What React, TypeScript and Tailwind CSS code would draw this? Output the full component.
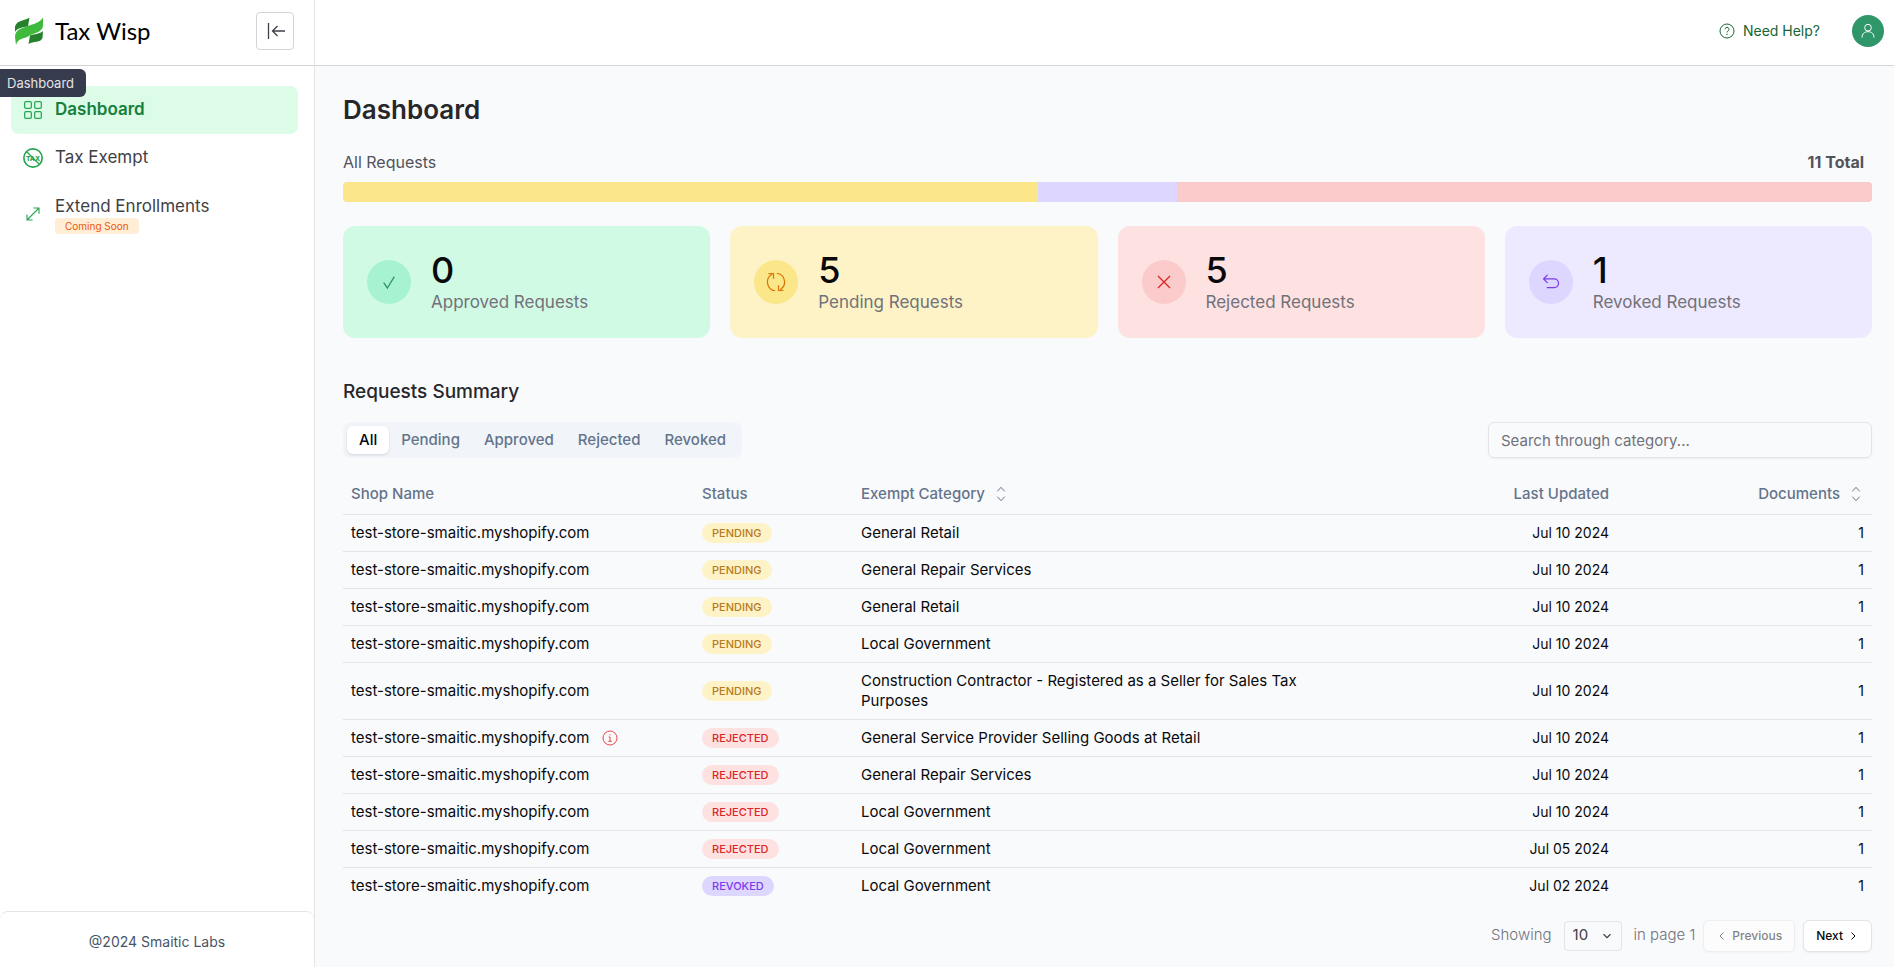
import type { ReactNode } from "react";
import { PiArrowUUpLeft } from "react-icons/pi";

const requests = [
  { status: "PENDING", category: "General Retail", updated: "Jul 10 2024" },
  { status: "PENDING", category: "General Repair Services", updated: "Jul 10 2024" },
  { status: "PENDING", category: "General Retail", updated: "Jul 10 2024" },
  { status: "PENDING", category: "Local Government", updated: "Jul 10 2024" },
  {
    status: "PENDING",
    category: "Construction Contractor - Registered as a Seller for Sales Tax Purposes",
    updated: "Jul 10 2024",
  },
  {
    status: "REJECTED",
    category: "General Service Provider Selling Goods at Retail",
    updated: "Jul 10 2024",
    info: true,
  },
  { status: "REJECTED", category: "General Repair Services", updated: "Jul 10 2024" },
  { status: "REJECTED", category: "Local Government", updated: "Jul 10 2024" },
  { status: "REJECTED", category: "Local Government", updated: "Jul 05 2024" },
  { status: "REVOKED", category: "Local Government", updated: "Jul 02 2024" },
];

const badgeColors: Record<string, string> = {
  PENDING: "bg-[#fef3c7] text-[#b97a1b]",
  REJECTED: "bg-[#fee2e2] text-[#dc2626]",
  REVOKED: "bg-[#ddd6fe] text-[#7c3aed]",
};

const tabs = ["All", "Pending", "Approved", "Rejected", "Revoked"];

function Icon({ size = 20, width = 1.5, children }: { size?: number; width?: number; children: ReactNode }) {
  return (
    <svg
      width={size}
      height={size}
      viewBox="0 0 24 24"
      fill="none"
      stroke="currentColor"
      strokeWidth={width}
      className="shrink-0"
      aria-hidden="true"
    >
      {children}
    </svg>
  );
}

function Logo() {
  return (
    <svg width="28" height="28" viewBox="0 0 28 28" className="shrink-0" aria-hidden="true">
      <path d="M0 15V9.500C2 3 9 4 14.500.5L13 9.500C8 10 2 11 0 15Z" fill="#27802b" />
      <path d="M13.500 27 15 18.500c5-1.500 10-1.500 13-4.500l-.5 7c-2 5-9 3-14 6Z" fill="#27802b" />
      <path d="M1 28 0 20C0 12 8 11 13 9 18 7 25 6 28 .5V9c-1 7-10 7-14 10-5 3-11 2-13 9Z" fill="#3fba3c" />
    </svg>
  );
}

function SortIcon() {
  return (
    <Icon size={16}>
      <path d="M6.500 8 12 2l5.500 6M6.500 16l5.500 6 5.500-6" />
    </Icon>
  );
}

function StatCard({
  value,
  label,
  card,
  circle,
  children,
}: {
  value: number;
  label: string;
  card: string;
  circle: string;
  children: ReactNode;
}) {
  return (
    <div className={`flex h-28 items-center gap-5 rounded-xl px-6 pb-px ${card}`}>
      <div className={`flex size-11 shrink-0 items-center justify-center rounded-full ${circle}`}>
        {children}
      </div>
      <div>
        <p className="text-4xl font-medium leading-10 text-[#09090b]">{value}</p>
        <p className="text-[17px] leading-6 text-[#71717a]">{label}</p>
      </div>
    </div>
  );
}

export default function App() {
  return (
    <div className="flex min-h-screen bg-[#f9fafc] font-['Inter',sans-serif] text-[15px] text-[#09090b]">
      <aside className="flex w-[315px] shrink-0 flex-col border-r border-[#e4e4e7] bg-white">
        <div className="flex h-[66px] items-center border-b border-[#d4d4d8] pb-[3px] pl-[15px] pr-5">
          <Logo />
          <span className="ml-3 font-['Lato',sans-serif] text-2xl text-black">Tax Wisp</span>
          <button
            type="button"
            aria-label="Collapse sidebar"
            className="ml-auto flex size-[38px] items-center justify-center rounded border border-[#d4d4d8] text-[#3f3f46]"
          >
            <Icon size={24} width={1.3}>
              <path d="M5.500 4v16M22 12H9.500M14.500 7l-5 5 5 5" />
            </Icon>
          </button>
        </div>

        <nav className="relative flex flex-col px-[11px] pt-5 text-[17px] text-[#3f3f46]">
          <a
            href="#dashboard"
            className="mr-[5px] flex h-12 items-center gap-3 rounded-lg bg-[#dcfce7] px-3 font-semibold text-[#15803d]"
          >
            <span className="flex w-5 justify-center text-[#28a652]">
              <Icon>
                <rect x="2" y="2" width="8" height="8" rx="1.500" />
                <rect x="14" y="2" width="8" height="8" rx="1.500" />
                <rect x="2" y="14" width="8" height="8" rx="1.500" />
                <rect x="14" y="14" width="8" height="8" rx="1.500" />
              </Icon>
            </span>
            Dashboard
          </a>
          <a href="#tax-exempt" className="flex h-12 items-center gap-3 px-3">
            <span className="flex w-5 justify-center text-[#28a652]">
              <Icon width={2}>
                <circle cx="12" cy="12" r="11" />
                <path d="M4.500 4.500l15 15" strokeWidth="1.500" />
                <text
                  x="12"
                  y="15"
                  textAnchor="middle"
                  fontSize="8"
                  fontWeight="800"
                  fill="currentColor"
                  stroke="none"
                  aria-hidden="true"
                >
                  TAX
                </text>
              </Icon>
            </span>
            Tax Exempt
          </a>
          <a href="#extend" className="flex h-16 items-center gap-3 px-3">
            <span className="flex w-5 justify-center text-[#28a652]">
              <Icon size={18}>
                <path d="M4 20 20 4M12.500 4h7.500v7.500M11.500 20H4v-7.500" />
              </Icon>
            </span>
            <span className="flex flex-col items-start">
              <span className="leading-6">Extend Enrollments</span>
              <span className="rounded bg-[#ffedd5] px-[10px] text-[10px] leading-4 text-[#ea580c]">
                Coming Soon
              </span>
            </span>
          </a>
          <span
            role="tooltip"
            className="absolute left-0 top-[3px] rounded-r-md bg-[#2b3044]/95 pl-[7px] pr-3 text-[13px] leading-7 text-[#e4e4e7]"
          >
            Dashboard
          </span>
        </nav>

        <footer className="mt-auto flex h-14 items-center justify-center rounded-t-lg border-t border-[#e4e4e7] pt-1 text-sm text-[#475569]">
          @2024 Smaitic Labs
        </footer>
      </aside>

      <div className="flex min-w-0 flex-1 flex-col">
        <header className="flex h-[66px] items-center justify-end gap-8 border-b border-[#d4d4d8] bg-white pb-[3px] pr-[10px]">
          <a href="#help" className="flex items-center gap-2 text-sm text-[#166534]">
            <Icon size={16}>
              <circle cx="12" cy="12" r="10.500" />
              <path d="M9 9.500a3 3 0 1 1 4.500 2.600c-1 .5-1.500 1-1.500 2M12 16v2" />
            </Icon>
            Need Help?
          </a>
          <button
            type="button"
            aria-label="Account"
            className="flex size-8 items-center justify-center rounded-full bg-[#2f966a] text-white"
          >
            <Icon size={16}>
              <circle cx="12" cy="7" r="5" />
              <path d="M3 22c0-6 4-9 9-9s9 3 9 9" />
            </Icon>
          </button>
        </header>

        <main className="flex flex-col pl-7 pr-[22px] pt-7">
          <h1 className="text-[26px] font-semibold leading-8 text-[#27272a]">Dashboard</h1>

          <div className="mt-6 flex justify-between pr-2 text-base leading-6 text-[#52525b]">
            <span>All Requests</span>
            <span className="font-bold">11 Total</span>
          </div>
          <div className="mt-2 flex h-5 overflow-hidden rounded">
            <div className="flex-5 bg-[#fce68a]" />
            <div className="flex-1 bg-[#ddd6fe]" />
            <div className="flex-5 bg-[#fbcaca]" />
          </div>

          <div className="mt-6 grid grid-cols-4 gap-5">
            <StatCard value={0} label="Approved Requests" card="bg-[#d1fae5]" circle="bg-[#a7f3d0] text-[#2f966a]">
              <Icon size={16} width={2}>
                <path d="M4 13l5.500 8L20 4" />
              </Icon>
            </StatCard>
            <StatCard value={5} label="Pending Requests" card="bg-[#fef3c7]" circle="bg-[#fce68a] text-[#d97706]">
              <Icon>
                <path d="M11 22.500A10.500 10.500 0 0 1 7 3M3 2h6v6M13 1.500A10.500 10.500 0 0 1 17 21M21 22h-6v-6" />
              </Icon>
            </StatCard>
            <StatCard value={5} label="Rejected Requests" card="bg-[#fee2e2]" circle="bg-[#fbcaca] text-[#dc2626]">
              <Icon size={16} width={2}>
                <path d="M3 3l18 18M21 3 3 21" />
              </Icon>
            </StatCard>
            <StatCard value={1} label="Revoked Requests" card="bg-[#ede9fe]" circle="bg-[#ddd6fe] text-[#7c3aed]">
              <PiArrowUUpLeft size={20} />
            </StatCard>
          </div>

          <h2 className="mt-10 text-[19px] font-medium leading-7 text-[#27272a]">Requests Summary</h2>

          <div className="mt-4 flex items-center justify-between">
            <div role="tablist" className="flex h-9 items-center rounded-lg bg-[#f1f5f9] p-1 font-medium text-[#64748b]">
              {tabs.map((tab, i) => (
                <button
                  key={tab}
                  type="button"
                  role="tab"
                  aria-selected={i === 0}
                  className={`h-7 rounded-md px-3 ${i === 0 ? "bg-white text-[#020617] shadow-sm" : ""}`}
                >
                  {tab}
                </button>
              ))}
            </div>
            <input
              type="text"
              aria-label="Search through category"
              placeholder="Search through category..."
              className="h-9 w-96 rounded-md border border-[#e4e4e7] bg-transparent px-3 shadow-xs placeholder:text-[#71717a]"
            />
          </div>

          <table className="mt-4 w-full table-fixed text-left leading-5">
            <thead>
              <tr className="h-10 border-b border-[#e4e4e7] text-[#64748b]">
                <th className="w-[351px] px-2 font-medium">Shop Name</th>
                <th className="w-[159px] px-2 font-medium">Status</th>
                <th className="px-2 font-medium">
                  <span className="flex items-center gap-2">
                    Exempt Category <SortIcon />
                  </span>
                </th>
                <th className="w-[280px] px-2 text-right font-medium">Last Updated</th>
                <th className="w-[255px] px-2 font-medium">
                  <span className="flex items-center justify-end gap-2">
                    Documents <SortIcon />
                  </span>
                </th>
              </tr>
            </thead>
            <tbody>
              {requests.map((r, i) => (
                <tr key={i} className="border-b border-[#e4e4e7] last:border-0">
                  <td className="px-2 py-2">
                    <span className="flex items-center gap-3">
                      test-store-smaitic.myshopify.com
                      {r.info && (
                        <span className="text-[#ef4444]">
                          <Icon size={16}>
                            <circle cx="12" cy="12" r="10.500" />
                            <path d="M10 10.500h2V17M9.500 17h5M12 6.500v1.500" />
                          </Icon>
                        </span>
                      )}
                    </span>
                  </td>
                  <td className="px-2">
                    <span className={`block w-fit rounded-full px-[10px] text-[11px] font-medium leading-5 ${badgeColors[r.status]}`}>
                      {r.status}
                    </span>
                  </td>
                  <td className="px-2 py-2">
                    <p className="max-w-[450px]">{r.category}</p>
                  </td>
                  <td className="px-2 text-right text-sm">{r.updated}</td>
                  <td className="px-2 text-right text-sm">1</td>
                </tr>
              ))}
            </tbody>
          </table>

          <div className="mt-4 flex items-center justify-end text-[#71717a]">
            <label htmlFor="page-size" className="font-light">
              Showing
            </label>
            <div className="relative mx-3">
              <select
                id="page-size"
                defaultValue="10"
                className="block h-[30px] w-[58px] appearance-none rounded border border-[#e4e4e7] bg-transparent pl-2 text-[#3f3f46]"
              >
                <option>10</option>
                <option>20</option>
                <option>50</option>
              </select>
              <span className="pointer-events-none absolute right-2 top-2 text-[#3f3f46]">
                <Icon size={14} width={2}>
                  <path d="M6 9l6 6 6-6" />
                </Icon>
              </span>
            </div>
            <span className="font-light">in page 1</span>
            <button
              type="button"
              disabled
              className="ml-2 flex h-8 items-center gap-1 rounded-md border border-[#e4e4e7] bg-white px-3 text-xs font-medium text-[#09090b] opacity-50 shadow-xs"
            >
              <Icon size={12} width={2}>
                <path d="M15 5l-7 7 7 7" />
              </Icon>
              Previous
            </button>
            <button
              type="button"
              className="ml-2 flex h-8 items-center gap-1 rounded-md border border-[#e4e4e7] bg-white px-3 text-xs font-medium text-[#09090b] shadow-xs"
            >
              Next
              <Icon size={12} width={2}>
                <path d="M9 5l7 7-7 7" />
              </Icon>
            </button>
          </div>
        </main>
      </div>
    </div>
  );
}
